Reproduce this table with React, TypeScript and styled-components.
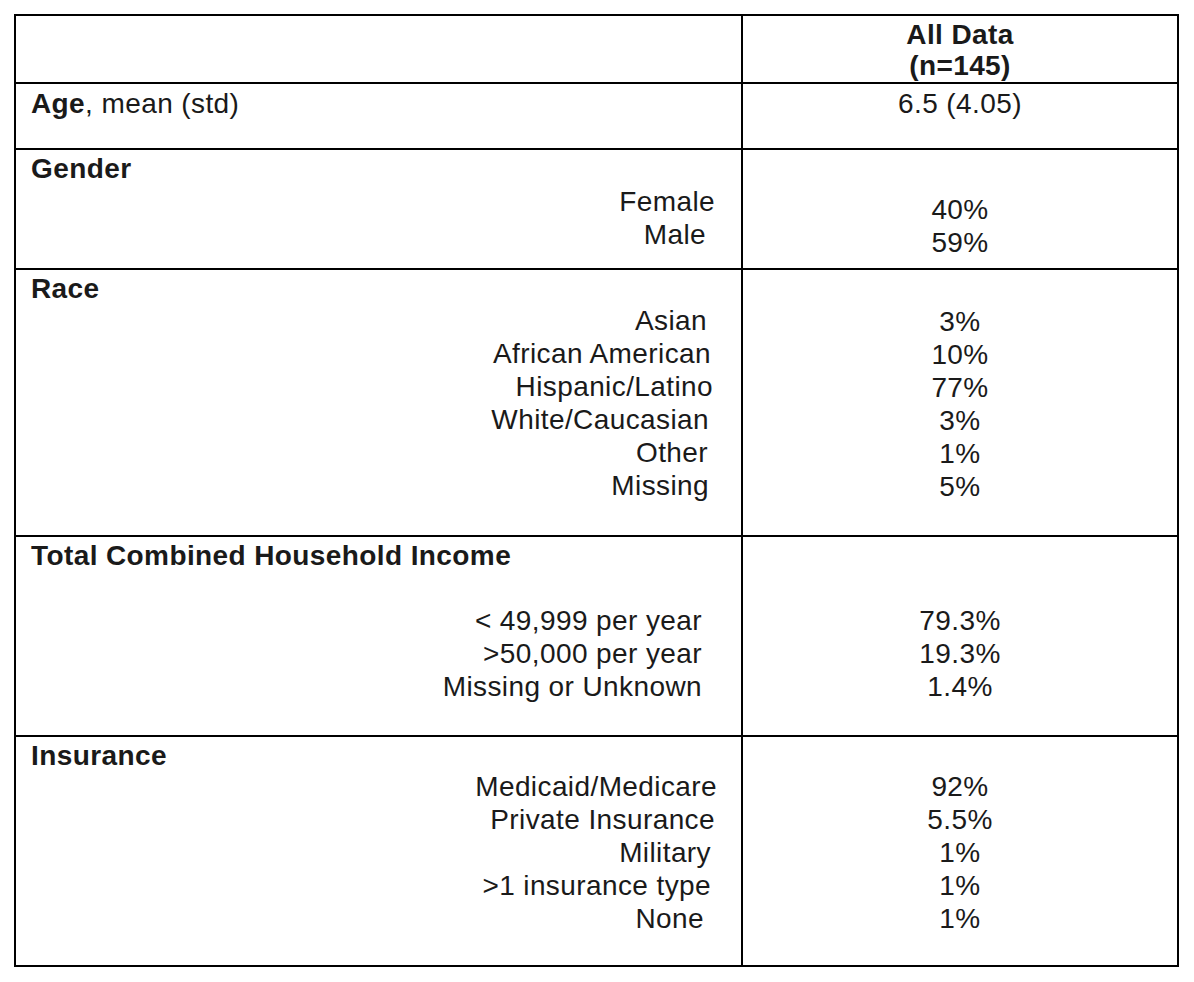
import React from "react";
import styled, { createGlobalStyle } from "styled-components";

const Global = createGlobalStyle`
  html, body { margin: 0; padding: 0; background: #fff; }
  body { font-family: "Liberation Sans", Arial, Helvetica, sans-serif; color: #1a1a1a; }
`;

const Page = styled.div`
  padding: 14px;
`;

const Table = styled.div`
  width: 1165px;
  border: 2px solid #000;
  box-sizing: border-box;
  display: flex;
  flex-direction: column;
  font-size: 28px;
  line-height: 33px;
  letter-spacing: 0.4px;
`;

const Row = styled.div<{ $h: number; $first?: boolean }>`
  display: grid;
  grid-template-columns: 727px 1fr;
  height: ${(p) => p.$h}px;
  box-sizing: border-box;
  border-top: ${(p) => (p.$first ? "none" : "2px solid #000")};
`;

const LeftCell = styled.div<{ $pt: number }>`
  border-right: 2px solid #000;
  box-sizing: border-box;
  padding: ${(p) => p.$pt}px 0 0 15px;
  display: flex;
  flex-direction: column;
`;

const RightCell = styled.div<{ $pt: number }>`
  padding-top: ${(p) => p.$pt}px;
  display: flex;
  flex-direction: column;
  align-items: center;
`;

const HeadCell = styled(RightCell)`
  font-weight: 700;
  line-height: 31px;
`;

const Heading = styled.div`
  font-weight: 700;
`;

const Light = styled.span`
  font-weight: 400;
`;

const Labels = styled.div<{ $mt: number }>`
  display: flex;
  flex-direction: column;
  align-items: flex-end;
  margin-top: ${(p) => p.$mt}px;
`;

const Label = styled.div<{ $inset: number }>`
  padding-right: ${(p) => p.$inset}px;
  white-space: pre;
`;

const Value = styled.div`
  white-space: pre;
`;

type Item = { label: string; inset: number; value: string };

type Section = {
  title: string;
  h: number;
  labelGap: number;
  valuePad: number;
  items: Item[];
};

const sections: Section[] = [
  {
    title: "Gender",
    h: 120,
    labelGap: 0,
    valuePad: 43,
    items: [
      { label: "Female", inset: 26, value: "40%" },
      { label: "Male", inset: 35, value: "59%" },
    ],
  },
  {
    title: "Race",
    h: 267,
    labelGap: -1,
    valuePad: 35,
    items: [
      { label: "Asian", inset: 34, value: "3%" },
      { label: "African American", inset: 30, value: "10%" },
      { label: "Hispanic/Latino", inset: 28, value: "77%" },
      { label: "White/Caucasian", inset: 32, value: "3%" },
      { label: "Other", inset: 33, value: "1%" },
      { label: "Missing", inset: 32, value: "5%" },
    ],
  },
  {
    title: "Total Combined Household Income",
    h: 200,
    labelGap: 32,
    valuePad: 67,
    items: [
      { label: "< 49,999 per year", inset: 39, value: "79.3%" },
      { label: ">50,000 per year", inset: 39, value: "19.3%" },
      { label: "Missing or Unknown", inset: 39, value: "1.4%" },
    ],
  },
  {
    title: "Insurance",
    h: 230,
    labelGap: -2,
    valuePad: 33,
    items: [
      { label: "Medicaid/Medicare", inset: 24, value: "92%" },
      { label: "Private Insurance", inset: 26, value: "5.5%" },
      { label: "Military", inset: 30, value: "1%" },
      { label: ">1 insurance type", inset: 30, value: "1%" },
      { label: "None", inset: 37, value: "1%" },
    ],
  },
];

export default function App() {
  return (
    <Page>
      <Global />
      <Table>
        <Row $h={66} $first>
          <LeftCell $pt={0} />
          <HeadCell $pt={3}>
            <div>All Data</div>
            <div>(n=145)</div>
          </HeadCell>
        </Row>
        <Row $h={66}>
          <LeftCell $pt={3}>
            <Heading>
              Age<Light>, mean (std)</Light>
            </Heading>
          </LeftCell>
          <RightCell $pt={3}>
            <Value>6.5 (4.05)</Value>
          </RightCell>
        </Row>
        {sections.map((s) => (
          <Row key={s.title} $h={s.h}>
            <LeftCell $pt={2}>
              <Heading>{s.title}</Heading>
              <Labels $mt={s.labelGap}>
                {s.items.map((it) => (
                  <Label key={it.label} $inset={it.inset}>
                    {it.label}
                  </Label>
                ))}
              </Labels>
            </LeftCell>
            <RightCell $pt={s.valuePad}>
              {s.items.map((it, i) => (
                <Value key={i}>{it.value}</Value>
              ))}
            </RightCell>
          </Row>
        ))}
      </Table>
    </Page>
  );
}
